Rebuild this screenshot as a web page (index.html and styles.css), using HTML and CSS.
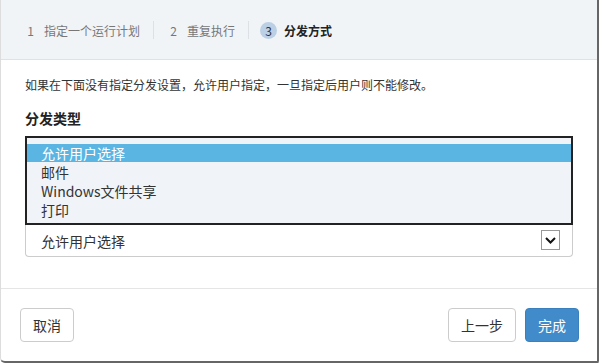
FILE: index.html
```html
<!DOCTYPE html>
<html>
<head>
<meta charset="utf-8">
<link rel="stylesheet" href="styles.css">
</head>
<body>
<div class="dialog">
  <div class="steps">
    <div class="step step-first"><span class="num">1</span><span class="label">指定一个运行计划</span></div>
    <div class="step"><span class="num">2</span><span class="label">重复执行</span></div>
    <div class="step active"><span class="num">3</span><span class="label">分发方式</span></div>
  </div>
  <div class="content">
    <p class="hint">如果在下面没有指定分发设置，允许用户指定，一旦指定后用户则不能修改。</p>
    <h4 class="title">分发类型</h4>
    <ul class="options">
      <li class="opt selected">允许用户选择</li>
      <li class="opt">邮件</li>
      <li class="opt">Windows文件共享</li>
      <li class="opt">打印</li>
    </ul>
    <div class="select">
      <span class="value">允许用户选择</span>
      <span class="arrow"><svg width="11" height="7" viewBox="0 0 11 7"><polyline points="1,1 5.5,5.5 10,1" fill="none" stroke="#111" stroke-width="2"/></svg></span>
    </div>
  </div>
  <div class="footer">
    <button class="btn">取消</button>
    <div class="right">
      <button class="btn">上一步</button>
      <button class="btn primary">完成</button>
    </div>
  </div>
</div>
</body>
</html>
```
FILE: styles.css
```css
* { box-sizing: border-box; }
html, body { margin: 0; padding: 0; background: #fff; }
body { font-family: "Noto Sans CJK SC", "Noto Sans", sans-serif; color: #333; }
.dialog {
  width: 599px;
  height: 363px;
  border-right: 2px solid #666;
  border-bottom: 2px solid #666;
  border-left: 1px solid #ddd;
  border-bottom-left-radius: 5px;
  border-bottom-right-radius: 2px;
  display: flex;
  flex-direction: column;
  background: #fff;
}
.steps {
  height: 60px;
  background: #f1f4f7;
  border-bottom: 1px solid #dfe2e5;
  display: flex;
  align-items: center;
  padding-top: 1px;
}
.step {
  display: flex;
  align-items: center;
  height: 18px;
  font-size: 12px;
  color: #777;
  padding: 0 13px 0 11px;
  border-left: 1px solid #dde1e5;
}
.step-first { border-left: none; padding-left: 21px; padding-right: 13px; }
.num {
  width: 17px;
  height: 17px;
  line-height: 17px;
  text-align: center;
  border-radius: 50%;
  margin-right: 5px;
}
.active .num { background: #bcd0e5; color: #333; margin-right: 7px; }
.active .label { color: #222; font-weight: bold; }
.content { padding: 16px 0 0 24px; flex: 1; }
.hint { margin: 0; font-size: 12px; line-height: 18px; color: #333; }
.title { margin: 14px 0 0; font-size: 14px; line-height: 20px; font-weight: bold; color: #222; }
.options {
  list-style: none;
  margin: 8px 0 0;
  padding: 6px 0 3px;
  width: 548px;
  border: 2px solid #222;
  background: #f0f4f8;
}
.opt {
  height: 19px;
  line-height: 19px;
  font-size: 14px;
  padding-left: 14px;
  color: #333;
}
.opt.selected { background: #5ab5e2; color: #fff; height: 18px; line-height: 18px; margin-bottom: 1px; }
.select {
  width: 548px;
  height: 32px;
  border: 1px solid #ccc;
  border-top: none;
  border-radius: 0 0 4px 4px;
  display: flex;
  align-items: center;
  justify-content: space-between;
  padding: 0 12px 0 15px;
  font-size: 14px;
  color: #333;
}
.arrow {
  width: 19px;
  height: 20px;
  border: 1px solid #999;
  background: #fff;
  display: flex;
  align-items: center;
  justify-content: center;
  margin-top: -1px;
}
.footer {
  border-top: 1px solid #e5e5e5;
  height: 73px;
  display: flex;
  justify-content: space-between;
  align-items: flex-start;
  padding: 19px 18px 0 19px;
}
.right { display: flex; gap: 9px; }
.btn {
  height: 34px;
  padding: 0 12px;
  font-family: inherit;
  font-size: 14px;
  color: #333;
  background: #fff;
  border: 1px solid #ccc;
  border-radius: 4px;
}
.btn.primary { background: #428bca; border-color: #3a80bd; color: #fff; }
```
